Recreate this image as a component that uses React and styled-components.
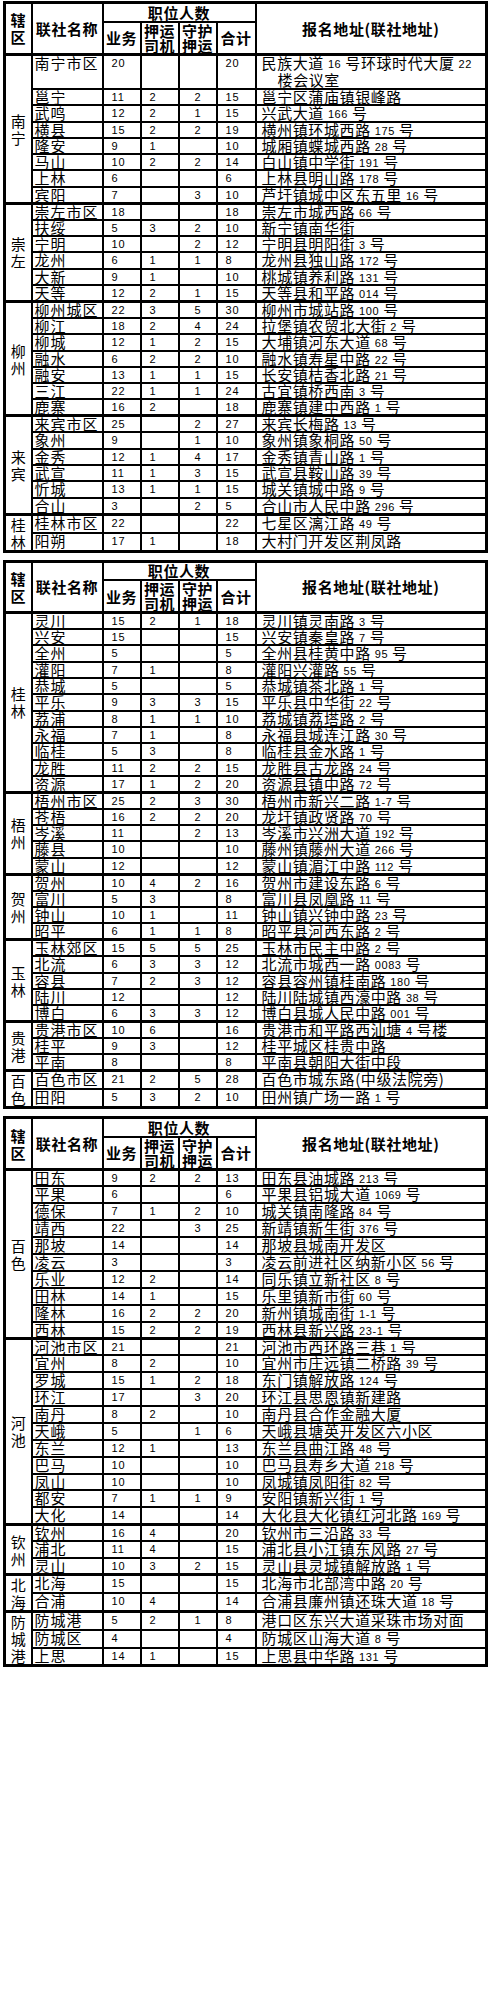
import React from "react";
import styled, { createGlobalStyle, css } from "styled-components";

const GlobalStyle = createGlobalStyle`
  html, body {
    margin: 0;
    padding: 0;
    background: #fff;
  }
  body {
    font-family: "Noto Sans CJK SC", "Liberation Sans", sans-serif;
    color: #000;
  }
`;

const Page = styled.div`
  width: 490px;
  box-sizing: border-box;
  padding: 1px 0 0 3px;
  display: flex;
  flex-direction: column;
  gap: 7px;
`;

const Sheet = styled.table`
  width: 482px;
  table-layout: fixed;
  border-collapse: collapse;
  border: 3px solid #000;
  font-size: 15px;
`;

const Col = styled.col`
  width: ${(p) => p.$w}px;
`;

const HeadRow = styled.tr`
  height: ${(p) => p.$h}px;
`;

const HeadCell = styled.th`
  border: 2px solid #000;
  padding: 0;
  font-weight: bold;
  font-size: 15px;
  line-height: 15px;
  letter-spacing: 0.6px;
  text-align: center;
  vertical-align: middle;
  white-space: nowrap;
`;

const BodyRow = styled.tr`
  height: ${(p) => p.$h}px;
  ${(p) =>
    p.$first &&
    css`
      & > td {
        border-top-width: 3px;
      }
    `}
`;

const RegionCell = styled.td`
  border: 2px solid #000;
  padding: 0;
  text-align: center;
  vertical-align: middle;
`;

const RegionChar = styled.span`
  display: block;
  line-height: 17px;
`;

const NameCell = styled.td`
  border: 2px solid #000;
  padding: 0 0 0 2px;
  line-height: 14px;
  letter-spacing: 1px;
  vertical-align: top;
  white-space: nowrap;
`;

const NumCell = styled.td`
  border: 2px solid #000;
  padding: 0 0 0 ${(p) => p.$pad}px;
  font-family: "Liberation Sans", sans-serif;
  font-size: 11px;
  line-height: 14px;
  letter-spacing: 1px;
  vertical-align: top;
`;

const AddrCell = styled.td`
  border: 2px solid #000;
  padding: 0 0 0 5px;
  line-height: 14px;
  letter-spacing: 0.6px;
  vertical-align: top;
`;

const AddrLine = styled.span`
  display: block;
  white-space: nowrap;
  padding-left: ${(p) => (p.$indent ? 16 : 0)}px;
  & + & {
    margin-top: 3px;
  }
`;

const Latin = styled.span`
  font-family: "Liberation Sans", sans-serif;
  font-size: 11px;
  line-height: 0;
  letter-spacing: 0.6px;
  vertical-align: 1px;
`;

const tables = [
  {
    rowH: 16.3,
    headH: 51,
    groups: [
      {
        region: "南宁",
        rows: [
          "南宁市区|20|||20|民族大道 16 号环球时代大厦 22/楼会议室",
          "邕宁|11|2|2|15|邕宁区蒲庙镇银峰路",
          "武鸣|12|2|1|15|兴武大道 166 号",
          "横县|15|2|2|19|横州镇环城西路 175 号",
          "隆安|9|1||10|城厢镇蝶城西路 28 号",
          "马山|10|2|2|14|白山镇中学街 191 号",
          "上林|6|||6|上林县明山路 178 号",
          "宾阳|7||3|10|芦圩镇城中区东五里 16 号",
        ],
      },
      {
        region: "崇左",
        rows: [
          "崇左市区|18|||18|崇左市城西路 66 号",
          "扶绥|5|3|2|10|新宁镇南华街",
          "宁明|10||2|12|宁明县明阳街 3 号",
          "龙州|6|1|1|8|龙州县独山路 172 号",
          "大新|9|1||10|桃城镇养利路 131 号",
          "天等|12|2|1|15|天等县和平路 014 号",
        ],
      },
      {
        region: "柳州",
        rows: [
          "柳州城区|22|3|5|30|柳州市城站路 100 号",
          "柳江|18|2|4|24|拉堡镇农贸北大街 2 号",
          "柳城|12|1|2|15|大埔镇河东大道 68 号",
          "融水|6|2|2|10|融水镇寿星中路 22 号",
          "融安|13|1|1|15|长安镇桔香北路 21 号",
          "三江|22|1|1|24|古宜镇桥西南 3 号",
          "鹿寨|16|2||18|鹿寨镇建中西路 1 号",
        ],
      },
      {
        region: "来宾",
        rows: [
          "来宾市区|25||2|27|来宾长梅路 13 号",
          "象州|9||1|10|象州镇象桐路 50 号",
          "金秀|12|1|4|17|金秀镇青山路 1 号",
          "武宣|11|1|3|15|武宣县鞍山路 39 号",
          "忻城|13|1|1|15|城关镇城中路 9 号",
          "合山|3||2|5|合山市人民中路 296 号",
        ],
      },
      {
        region: "桂林",
        rows: [
          "桂林市区|22|||22|七星区漓江路 49 号",
          "阳朔|17|1||18|大村门开发区荆凤路",
        ],
      },
    ],
  },
  {
    rowH: 16.3,
    headH: 48,
    groups: [
      {
        region: "桂林",
        rows: [
          "灵川|15|2|1|18|灵川镇灵南路 3 号",
          "兴安|15|||15|兴安镇秦皇路 7 号",
          "全州|5|||5|全州县桂黄中路 95 号",
          "灌阳|7|1||8|灌阳兴灌路 55 号",
          "恭城|5|||5|恭城镇茶北路 1 号",
          "平乐|9|3|3|15|平乐县中华街 22 号",
          "荔浦|8|1|1|10|荔城镇荔塔路 2 号",
          "永福|7|1||8|永福县城连江路 30 号",
          "临桂|5|3||8|临桂县金水路 1 号",
          "龙胜|11|2|2|15|龙胜县古龙路 24 号",
          "资源|17|1|2|20|资源县镇中路 72 号",
        ],
      },
      {
        region: "梧州",
        rows: [
          "梧州市区|25|2|3|30|梧州市新兴二路 1-7 号",
          "苍梧|16|2|2|20|龙圩镇政贤路 70 号",
          "岑溪|11||2|13|岑溪市兴洲大道 192 号",
          "藤县|10|||10|藤州镇藤州大道 266 号",
          "蒙山|12|||12|蒙山镇湄江中路 112 号",
        ],
      },
      {
        region: "贺州",
        rows: [
          "贺州|10|4|2|16|贺州市建设东路 6 号",
          "富川|5|3||8|富川县凤凰路 11 号",
          "钟山|10|1||11|钟山镇兴钟中路 23 号",
          "昭平|6|1|1|8|昭平县河西东路 2 号",
        ],
      },
      {
        region: "玉林",
        rows: [
          "玉林郊区|15|5|5|25|玉林市民主中路 2 号",
          "北流|6|3|3|12|北流市城西一路 0083 号",
          "容县|7|2|3|12|容县容州镇桂南路 180 号",
          "陆川|12|||12|陆川陆城镇西濠中路 38 号",
          "博白|6|3|3|12|博白县城人民中路 001 号",
        ],
      },
      {
        region: "贵港",
        rows: [
          "贵港市区|10|6||16|贵港市和平路西汕塘 4 号楼",
          "桂平|9|3||12|桂平城区桂贵中路",
          "平南|8|||8|平南县朝阳大街中段",
        ],
      },
      {
        region: "百色",
        rows: [
          "百色市区|21|2|5|28|百色市城东路(中级法院旁)",
          "田阳|5|3|2|10|田州镇广场一路 1 号",
        ],
      },
    ],
  },
  {
    rowH: 16.9,
    headH: 51,
    groups: [
      {
        region: "百色",
        rows: [
          "田东|9|2|2|13|田东县油城路 213 号",
          "平果|6|||6|平果县铝城大道 1069 号",
          "德保|7|1|2|10|城关镇南隆路 84 号",
          "靖西|22||3|25|新靖镇新生街 376 号",
          "那坡|14|||14|那坡县城南开发区",
          "凌云|3|||3|凌云前进社区纳新小区 56 号",
          "乐业|12|2||14|同乐镇立新社区 8 号",
          "田林|14|1||15|乐里镇新市街 60 号",
          "隆林|16|2|2|20|新州镇城南街 1-1 号",
          "西林|15|2|2|19|西林县新兴路 23-1 号",
        ],
      },
      {
        region: "河池",
        rows: [
          "河池市区|21|||21|河池市西环路三巷 1 号",
          "宜州|8|2||10|宜州市庄远镇二桥路 39 号",
          "罗城|15|1|2|18|东门镇解放路 124 号",
          "环江|17||3|20|环江县思恩镇新建路",
          "南丹|8|2||10|南丹县合作金融大厦",
          "天峨|5||1|6|天峨县塘英开发区六小区",
          "东兰|12|1||13|东兰县曲江路 48 号",
          "巴马|10|||10|巴马县寿乡大道 218 号",
          "凤山|10|||10|凤城镇凤阳街 82 号",
          "都安|7|1|1|9|安阳镇新兴街 1 号",
          "大化|14|||14|大化县大化镇红河北路 169 号",
        ],
      },
      {
        region: "钦州",
        rows: [
          "钦州|16|4||20|钦州市三沿路 33 号",
          "浦北|11|4||15|浦北县小江镇东风路 27 号",
          "灵山|10|3|2|15|灵山县灵城镇解放路 1 号",
        ],
      },
      {
        region: "北海",
        rows: [
          "北海|15|||15|北海市北部湾中路 20 号",
          "合浦|10|4||14|合浦县廉州镇还珠大道 18 号",
        ],
      },
      {
        region: "防城港",
        rows: [
          "防城港|5|2|1|8|港口区东兴大道采珠市场对面",
          "防城区|4|||4|防城区山海大道 8 号",
          "上思|14|1||15|上思县中华路 131 号",
        ],
      },
    ],
  },
];

const columns = [27, 71, 38, 38, 38, 39, 231];

function withDigits(text) {
  return text
    .split(/([0-9-]+)/)
    .map((part, i) => (/^[0-9-]+$/.test(part) ? <Latin key={i}>{part}</Latin> : part));
}

function TableHead({ headH }) {
  return (
    <thead>
      <HeadRow $h={19}>
        <HeadCell rowSpan={2}>
          <RegionChar>辖</RegionChar>
          <RegionChar>区</RegionChar>
        </HeadCell>
        <HeadCell rowSpan={2}>联社名称</HeadCell>
        <HeadCell colSpan={4}>职位人数</HeadCell>
        <HeadCell rowSpan={2}>报名地址(联社地址)</HeadCell>
      </HeadRow>
      <HeadRow $h={headH - 19}>
        <HeadCell>业务</HeadCell>
        <HeadCell>
          押运
          <br />
          司机
        </HeadCell>
        <HeadCell>
          守护
          <br />
          押运
        </HeadCell>
        <HeadCell>合计</HeadCell>
      </HeadRow>
    </thead>
  );
}

function Group({ region, rows, rowH }) {
  return rows.map((line, i) => {
    const [name, work, driver, guard, total, addr] = line.split("|");
    const addrLines = addr.split("/");
    const h = addrLines.length > 1 ? rowH * addrLines.length + 2.4 : rowH;
    return (
      <BodyRow key={name} $h={h} $first={i === 0}>
        {i === 0 && (
          <RegionCell rowSpan={rows.length}>
            {[...region].map((ch, k) => (
              <RegionChar key={k}>{ch}</RegionChar>
            ))}
          </RegionCell>
        )}
        <NameCell>{name}</NameCell>
        <NumCell $pad={8}>{work}</NumCell>
        <NumCell $pad={8}>{driver}</NumCell>
        <NumCell $pad={15}>{guard}</NumCell>
        <NumCell $pad={8}>{total}</NumCell>
        <AddrCell>
          {addrLines.map((t, k) => (
            <AddrLine key={k} $indent={k > 0}>
              {withDigits(t)}
            </AddrLine>
          ))}
        </AddrCell>
      </BodyRow>
    );
  });
}

function RecruitTable({ rowH, headH, groups }) {
  return (
    <Sheet>
      <colgroup>
        {columns.map((w, i) => (
          <Col key={i} $w={w} />
        ))}
      </colgroup>
      <TableHead headH={headH} />
      <tbody>
        {groups.map((g, i) => (
          <Group key={i} region={g.region} rows={g.rows} rowH={rowH} />
        ))}
      </tbody>
    </Sheet>
  );
}

export default function App() {
  return (
    <>
      <GlobalStyle />
      <Page>
        {tables.map((t, i) => (
          <RecruitTable key={i} {...t} />
        ))}
      </Page>
    </>
  );
}
